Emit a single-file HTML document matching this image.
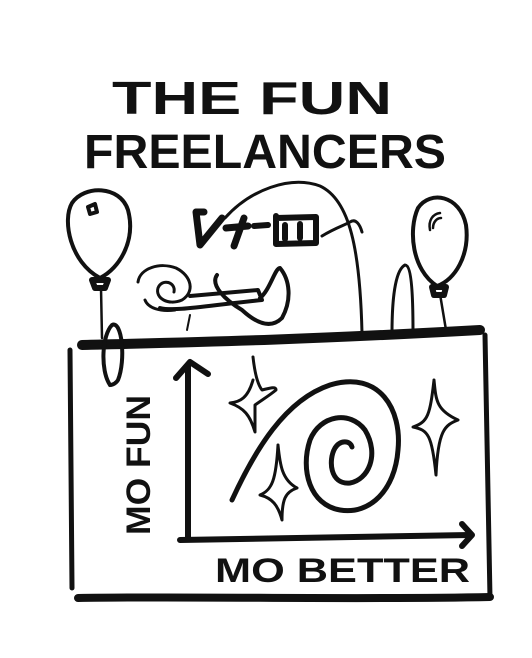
<!DOCTYPE html>
<html><head><style>
html,body{margin:0;padding:0;background:#fff;width:532px;height:658px;overflow:hidden}
svg{display:block}
text{font-family:"Liberation Sans",sans-serif;font-weight:bold;fill:#111}
</style></head><body>
<svg width="532" height="658" viewBox="0 0 532 658" fill="none" stroke="#111" stroke-linecap="round" stroke-linejoin="round">
<text x="112" y="114" font-size="46" textLength="280" lengthAdjust="spacingAndGlyphs" stroke="none">THE  FUN</text>
<text x="84" y="168" font-size="48" textLength="362" lengthAdjust="spacingAndGlyphs" stroke="none">FREELANCERS</text>
<path d="M100 278 C70 262 62 220 72 203 C84 185 120 185 128 210 C136 240 120 268 100 278Z" stroke-width="4"/>
<path d="M88 207 l7 -3 l2 8 l-7 2z" stroke-width="4"/>
<path d="M92 280 l16 0 l-3 8 l-10 0z" stroke-width="6"/>
<path d="M101 288 L102 338" stroke-width="2.5"/>
<path d="M437 286 C412 270 408 230 418 208 C430 190 460 195 466 225 C470 255 455 280 437 286Z" stroke-width="4"/>
<path d="M430 230 C428 220 433 214 440 213 M433 228 C433 222 437 218 441 218" stroke-width="2.5"/>
<path d="M432 287 l14 0 l-2 8 l-10 0z" stroke-width="6"/>
<path d="M440 294 L446 330" stroke-width="2.5"/>
<path d="M225 218 C250 190 290 175 320 186 C350 200 360 250 362 333" stroke-width="3"/>
<path d="M322 236 C335 228 345 225 350 222 C356 218 360 225 362 232" stroke-width="3"/>
<path d="M392 333 C392 300 395 270 405 265 C412 265 413 300 413 332" stroke-width="3"/>
<!-- glasses V-I-E -->
<path d="M196 212 L200 245 L222 218 M196 212 l8 0" stroke-width="7"/>
<path d="M226 228 l22 -2 M234 246 l10 -28" stroke-width="7"/>
<path d="M254 226 l14 -1 M276 216 l0 28 M276 218 l40 -1 l0 26 l-40 1z M285 225 l0 14 M300 224 l0 14" stroke-width="6"/>
<path d="M138 282 C140 268 160 262 176 268 C192 276 195 292 182 300 C168 306 155 298 158 288 C162 278 176 282 174 292" stroke-width="3"/>
<path d="M160 308 C175 312 210 305 262 300 L258 290 L190 296" stroke-width="4"/>
<path d="M145 300 C148 308 160 312 175 310" stroke-width="3"/>
<path d="M217 275 C210 285 225 300 242 310 C255 322 270 330 282 318 C292 300 290 280 280 268 C275 268 270 290 260 298" stroke-width="4"/>
<path d="M187 330 L190 315" stroke-width="2"/>
<path d="M82 345 C200 342 300 340 480 330" stroke-width="10"/>
<path d="M110 385 C100 370 102 335 112 325 C122 320 126 360 118 380 C115 385 110 385 110 385" stroke-width="4"/>
<path d="M70 350 L72 588" stroke-width="5"/>
<path d="M485 335 L490 598" stroke-width="5"/>
<path d="M78 598 C200 596 350 600 490 597" stroke-width="8"/>
<path d="M188 538 L188 365" stroke-width="6"/>
<path d="M176 378 L190 362 L208 374" stroke-width="6"/>
<path d="M180 540 C280 538 380 536 470 535" stroke-width="6"/>
<path d="M462 524 L472 535 L462 546" stroke-width="6"/>
<text transform="translate(150 535) rotate(-90)" font-size="34" textLength="140" lengthAdjust="spacingAndGlyphs" stroke="none">MO FUN</text>
<text x="215" y="582" font-size="34" textLength="255" lengthAdjust="spacingAndGlyphs" stroke="none">MO BETTER</text>
<path d="M232 500 C255 450 285 400 330 385 C380 370 402 410 398 450 C395 490 370 515 340 510 C310 505 300 470 310 440 C320 415 350 410 365 430 C380 455 368 480 350 483 C330 485 328 460 335 448 C340 440 350 440 352 447" stroke-width="5"/>
<path d="M253 357 C255 375 258 385 262 390 C270 388 276 386 276 390 C270 395 262 400 255 405 L255 432 C250 415 244 408 230 403 C240 402 248 398 253 380" stroke-width="3"/>
<path d="M278 445 C280 465 282 480 297 488 C285 492 282 500 282 520 C278 505 272 498 260 495 C272 490 276 480 278 445" stroke-width="3"/>
<path d="M434 380 C436 400 436 410 458 420 C445 425 438 430 436 475 C432 435 428 430 413 427 C428 422 430 415 434 380" stroke-width="3"/>
</svg>
</body></html>
